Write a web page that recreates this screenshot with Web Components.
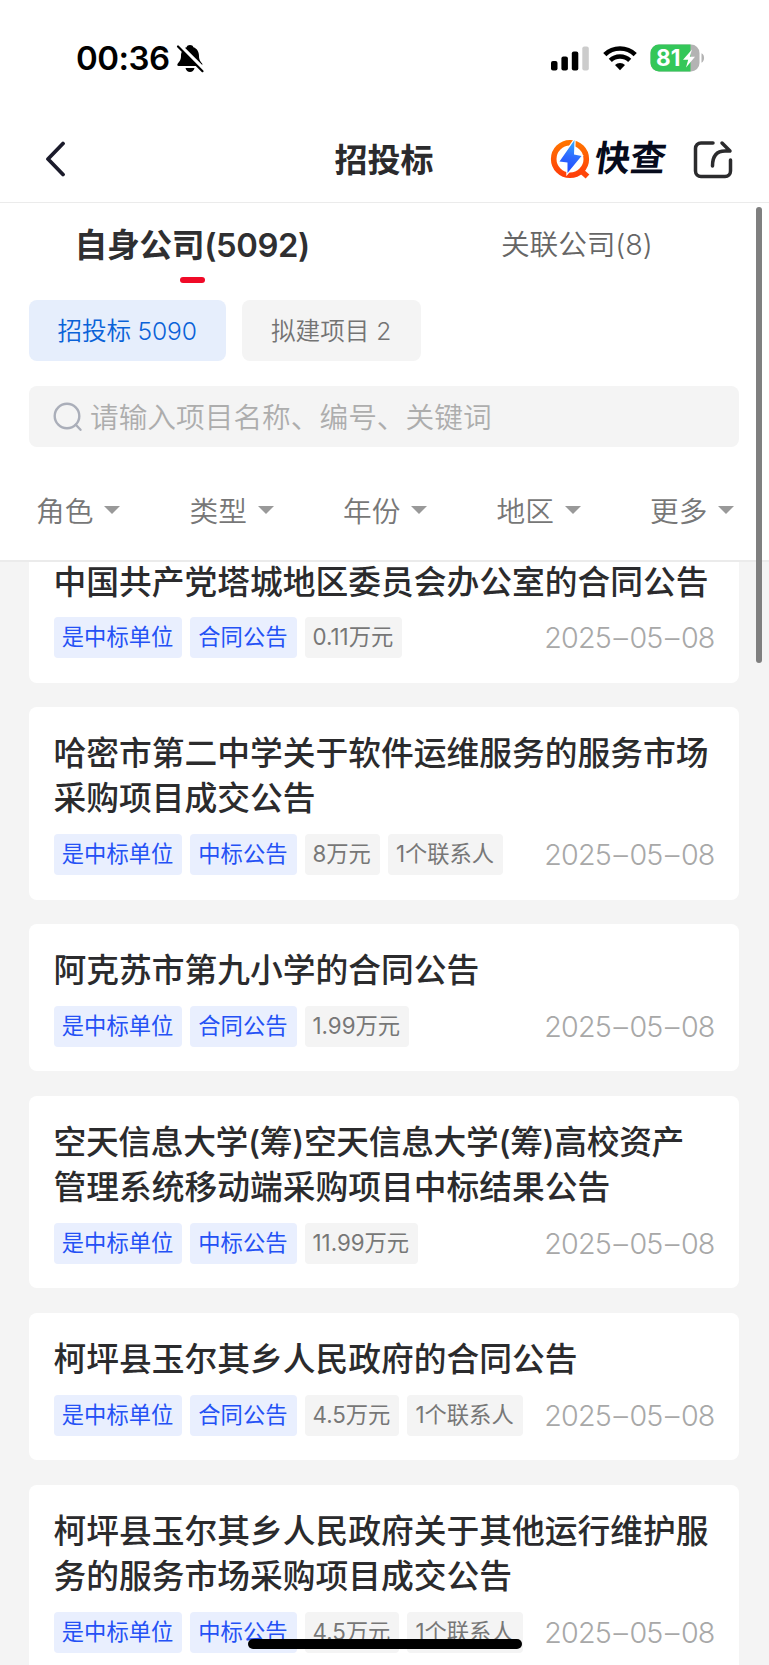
<!DOCTYPE html>
<html lang="zh-CN">
<head>
<meta charset="UTF-8">
<meta name="viewport" content="width=device-width, initial-scale=1.0">
<title>招投标</title>
<style>
    html, body {
        margin: 0;
        height: 100%;
    }
    body {
        height: 1665px;
        overflow: hidden;
        background: #f4f4f4;
        color: #2b2b2d;
        font-family: Inter, "Noto Sans CJK SC", sans-serif;
        font-weight: 350;
    }
</style>
</head>
<body>
<bid-page>
    <status-bar time="00:36" battery="81"></status-bar>
    <nav-bar>招投标</nav-bar>
    <company-tabs>
        <company-tab active>自身公司(5092)</company-tab>
        <company-tab>关联公司(8)</company-tab>
    </company-tabs>
    <chip-row>
        <filter-chip active>招投标 5090</filter-chip>
        <filter-chip>拟建项目 2</filter-chip>
    </chip-row>
    <search-box>请输入项目名称、编号、关键词</search-box>
    <filter-bar>
        <filter-item>角色</filter-item>
        <filter-item>类型</filter-item>
        <filter-item>年份</filter-item>
        <filter-item>地区</filter-item>
        <filter-item>更多</filter-item>
    </filter-bar>
    <bid-list></bid-list>
</bid-page>

<script>
const define = (name, html) => {
    customElements.define(name, class extends HTMLElement {
        constructor() {
            super();
            this.attachShadow({ mode: 'open' });
            this.shadowRoot.innerHTML = typeof html === 'function' ? html(this) : html;
        }
    });
};

define('bid-page', `
    <style>
        :host {
            display: flex;
            flex-direction: column;
            position: relative;
            height: 1665px;
            overflow: hidden;
        }
        .scrollbar {
            position: absolute;
            right: 7px;
            top: 207px;
            width: 6px;
            height: 456px;
            border-radius: 3px;
            background: #7f7f7f;
        }
        .home {
            position: absolute;
            left: 248px;
            bottom: 16px;
            width: 274px;
            height: 10px;
            border-radius: 5px;
            background: #000;
        }
    </style>
    <slot></slot>
    <div class="scrollbar"></div>
    <div class="home"></div>
`);

define('status-bar', el => `
    <style>
        :host {
            display: flex;
            align-items: center;
            box-sizing: border-box;
            height: 115px;
            flex: none;
            padding: 0 64px 0 76px;
            background: #fff;
            color: #000;
        }
        .time { font-size: 33px; font-weight: 560; letter-spacing: -0.500px; width: 99px; line-height: 40px; }
        svg { flex: none; display: block; }
        .right { margin-left: auto; display: flex; align-items: center; }
        .battery { display: grid; margin-left: 13px; }
        .battery > * { grid-area: 1 / 1; }
        .level { font-size: 22.500px; font-weight: 700; color: #fff; line-height: 28px; padding-left: 6px; }
    </style>
    <span class="time">${el.getAttribute('time')}</span>
    <svg width="30" height="30" viewBox="0 0 30 30">
        <path d="M15 2c1.800 0 3 .900 3.400 2.200 4 1.400 5.600 4.800 5.600 8.800 0 4 1.500 5.500 3 7.300.600.900.500 2.700-.900 2.700H3.600c-1.400 0-1.600-1.700-.800-2.600C4.500 18.500 6 17 6 13c0-4 1.600-7.400 5.600-8.800C12 2.900 13.200 2 15 2z"/>
        <path d="M10.500 25h9c-.600 2.600-2.300 4-4.500 4s-3.900-1.400-4.500-4z"/>
        <path d="M3.500 1.500L30 28" stroke="#fff" stroke-width="4.500"/>
        <path d="M0 0h4l-1 5 3 3-4 4H0z" fill="#fff"/>
        <path d="M3 3.500L27.500 28.200" stroke="#000" stroke-width="2.200" stroke-linecap="round"/>
    </svg>
    <div class="right">
        <svg width="38" height="26" viewBox="0 0 38 26">
            <rect x="0" y="16" width="6.500" height="9.500" rx="2"/>
            <rect x="10.400" y="11.500" width="6.500" height="14" rx="2"/>
            <rect x="20.800" y="6.500" width="6.500" height="19" rx="2"/>
            <rect x="31.300" y="1.500" width="6.500" height="24" rx="2" fill="#ccc"/>
        </svg>
        <svg width="34" height="26" viewBox="0 0 34 26" style="margin-left:14px" fill="none" stroke="#000">
            <path d="M1.800 9.600a22 22 0 0 1 30.400 0" stroke-width="4.600"/>
            <path d="M7.300 15.400a14 14 0 0 1 19.400 0" stroke-width="4.500"/>
            <path d="M17 25.300l-5-5.200a7 7 0 0 1 10 0z" fill="#000" stroke="none"/>
        </svg>
        <div class="battery">
            <svg width="55" height="28" viewBox="0 0 55 28">
                <defs><clipPath id="b"><rect x="0.500" y="0.500" width="49" height="27" rx="8.500"/></clipPath></defs>
                <g clip-path="url(#b)">
                    <rect width="55" height="28" fill="#b3b3b3"/>
                    <rect width="40.500" height="28" fill="#34c759"/>
                </g>
                <path d="M51.500 9.300c3.400 1.300 3.400 8.100 0 9.400z" fill="#b3b3b3"/>
                <path d="M42 5.500L33 15.800h5.200l-2.200 7.700 9-10.800h-5.200z" fill="#fff"/>
            </svg>
            <span class="level">${el.getAttribute('battery')}</span>
        </div>
    </div>
`);

define('nav-bar', `
    <style>
        :host {
            display: grid;
            grid-template-columns: 1fr auto 1fr;
            align-items: center;
            box-sizing: border-box;
            height: 88px;
            flex: none;
            padding: 0 35px 0 45px;
            border-bottom: 1px solid #ebebeb;
            background: #fff;
        }
        svg { display: block; flex: none; }
        .title { font-size: 33px; font-weight: 600; line-height: 46px; padding: 2px 11px 0 0; }
        .actions { display: flex; align-items: center; justify-content: flex-end; }
        .brand {
            font-size: 35.500px;
            font-weight: 700;
            line-height: 40px;
            color: #070b1c;
            margin: 1px 26px 0 3.500px;
            transform: skewX(-8deg);
        }
    </style>
    <svg width="24" height="36" viewBox="0 0 24 36" fill="none" stroke="#1b1b2b" stroke-width="3.800" stroke-linecap="round" stroke-linejoin="round">
        <path d="M18 2.500L3 18 18 33.500"/>
    </svg>
    <span class="title"><slot></slot></span>
    <div class="actions">
        <svg width="41" height="40" viewBox="0 0 41 40">
            <defs>
                <linearGradient id="ring" x1="0" y1="0" x2="0" y2="1"><stop offset="0" stop-color="#ff7300"/><stop offset="1" stop-color="#ff3f0a"/></linearGradient>
                <linearGradient id="bolt" x1="0.600" y1="0" x2="0.400" y2="1"><stop offset="0" stop-color="#35b0ff"/><stop offset="0.500" stop-color="#2f6bff"/><stop offset="1" stop-color="#1f49ff"/></linearGradient>
            </defs>
            <circle cx="20" cy="20" r="16.300" fill="none" stroke="url(#ring)" stroke-width="5.600"/>
            <path d="M29.500 30.500l8 7" stroke="#ff4508" stroke-width="5.600"/>
            <path d="M24.500 1L9.500 22.500 17.500 23.500 17.500 34 31.500 17 24 15.500z" fill="url(#bolt)" stroke="#fff" stroke-width="2.400" paint-order="stroke"/>
        </svg>
        <span class="brand">快查</span>
        <svg width="42" height="40" viewBox="0 0 42 40" fill="none" stroke="#2b2b2d" stroke-width="3.500" stroke-linecap="round" stroke-linejoin="round">
            <path d="M21 4H9a5.500 5.500 0 0 0-5.500 5.500v22.500A5.500 5.500 0 0 0 9 37.500h24a5.500 5.500 0 0 0 5.500-5.500V21"/>
            <path d="M30 4l8 8h-5C24.500 12 20.500 17.500 20.500 27"/>
        </svg>
    </div>
`);

define('company-tabs', `
    <style>
        :host {
            display: grid;
            grid-template-columns: 1fr 1fr;
            height: 97px;
            flex: none;
            background: #fff;
        }
    </style>
    <slot></slot>
`);

define('company-tab', `
    <style>
        :host {
            display: flex;
            flex-direction: column;
            align-items: center;
            padding-top: 18px;
            font-size: 28.700px;
            line-height: 48px;
            letter-spacing: -0.100px;
            color: #666;
        }
        :host([active]) { font-size: 32.800px; font-weight: 600; letter-spacing: -0.400px; color: #2f2f31; }
        :host([active])::after {
            content: "";
            width: 25px;
            height: 6px;
            margin-top: 8px;
            border-radius: 3px;
            background: #f00a28;
        }
    </style>
    <slot></slot>
`);

define('chip-row', `
    <style>
        :host { display: flex; gap: 16px; padding: 0 29px 25px; flex: none; background: #fff; }
    </style>
    <slot></slot>
`);

define('filter-chip', `
    <style>
        :host {
            box-sizing: border-box;
            height: 61px;
            padding: 1px 29.700px 0 29px;
            border-radius: 8px;
            background: #f4f4f4;
            color: #737373;
            font-size: 24.600px;
            line-height: 61px;
        }
        :host([active]) {
            background: #e6eefc;
            color: #0a62d8;
            padding: 1px 29.200px 0 28.500px;
            letter-spacing: -0.150px;
        }
    </style>
    <slot></slot>
`);

define('search-box', `
    <style>
        :host { display: block; padding: 0 30px 0 29px; flex: none; background: #fff; }
        .box {
            display: flex;
            align-items: center;
            gap: 7px;
            height: 61px;
            padding-left: 24px;
            border-radius: 8px;
            background: #f4f4f4;
            color: #adadad;
            font-size: 28.700px;
        }
        .hint { padding-bottom: 2px; }
    </style>
    <div class="box">
        <svg width="30" height="30" viewBox="0 0 30 30" fill="none" stroke="#aaaeb9" stroke-width="2.400" stroke-linecap="round">
            <circle cx="14" cy="14" r="12.300"/>
            <path d="M22.800 22.800l4.700 5"/>
        </svg>
        <span class="hint"><slot></slot></span>
    </div>
`);

define('filter-bar', `
    <style>
        :host {
            display: grid;
            grid-template-columns: repeat(5, 153.500px);
            box-sizing: border-box;
            height: 115px;
            flex: none;
            padding-left: 36px;
            padding-top: 11px;
            border-bottom: 2px solid #ebebeb;
            background: #fff;
        }
    </style>
    <slot></slot>
`);

define('filter-item', `
    <style>
        :host {
            display: flex;
            align-items: center;
            gap: 11px;
            color: #777;
            font-size: 28.700px;
        }
        i {
            margin-top: 2px;
            border: 8px solid transparent;
            border-top: 8.500px solid #999;
            border-bottom: 0;
        }
    </style>
    <slot></slot><i></i>
`);

define('bid-tag', `
    <style>
        :host {
            height: 41px;
            padding: 0 9px 0 8px;
            border-radius: 4px;
            background: #f4f4f4;
            color: #777;
            font-size: 22.300px;
            font-weight: 370;
            line-height: 39px;
            white-space: nowrap;
        }
        :host([blue]) { background: #e9effe; color: #2451f5; font-weight: 400; }
    </style>
    <slot></slot>
`);

define('bid-card', el => `
    <style>
        :host {
            display: block;
            padding: 24.100px 24.500px 24.600px 24.800px;
            border-radius: 8px;
            background: #fff;
        }
        .title {
            margin-left: -0.300px;
            font-size: 32.750px;
            font-weight: 500;
            line-height: 45px;
            white-space: pre;
        }
        .meta { display: flex; align-items: center; gap: 8px; height: 40.700px; margin-top: 12.900px; }
        .date {
            margin-left: auto;
            color: #a8a8a8;
            font-size: 28.700px;
            font-weight: 330;
            letter-spacing: -0.850px;
            white-space: nowrap;
        }
        .date i { font-style: normal; margin: 0 2.500px; }
    </style>
    <div class="title"><slot name="title"></slot></div>
    <div class="meta">
        <slot></slot>
        <span class="date">${el.getAttribute('date').replaceAll('–', '<i>–</i>')}</span>
    </div>
`);

const bids = [
    { title: '中国共产党塔城地区委员会办公室的合同公告', type: '合同公告', info: ['0.11万元'] },
    { title: '哈密市第二中学关于软件运维服务的服务市场\n采购项目成交公告', type: '中标公告', info: ['8万元', '1个联系人'] },
    { title: '阿克苏市第九小学的合同公告', type: '合同公告', info: ['1.99万元'] },
    { title: '空天信息大学(筹)空天信息大学(筹)高校资产\n管理系统移动端采购项目中标结果公告', type: '中标公告', info: ['11.99万元'] },
    { title: '柯坪县玉尔其乡人民政府的合同公告', type: '合同公告', info: ['4.5万元', '1个联系人'] },
    { title: '柯坪县玉尔其乡人民政府关于其他运行维护服\n务的服务市场采购项目成交公告', type: '中标公告', info: ['4.5万元', '1个联系人'] },
];

// lines with parentheses are set a little tighter
const titleHtml = title => title.replace(/^.*\(.*$/m, '<span class="tight">$&</span>');

// the list is scrolled a little, so the first card starts under the filter bar
define('bid-list', () => `
    <style>
        :host { display: block; flex: 1; min-height: 0; overflow: hidden; padding: 0 30px 0 29px; }
        .cards { display: flex; flex-direction: column; gap: 24.600px; margin-top: -26.500px; }
        .tight { letter-spacing: -0.330px; }
    </style>
    <div class="cards">
        ${bids.map(bid => `
            <bid-card date="2025–05–08">
                <span slot="title">${titleHtml(bid.title)}</span>
                <bid-tag blue>是中标单位</bid-tag>
                <bid-tag blue>${bid.type}</bid-tag>
                ${bid.info.map(text => `<bid-tag>${text}</bid-tag>`).join('')}
            </bid-card>
        `).join('')}
    </div>
`);
</script>
</body>
</html>
